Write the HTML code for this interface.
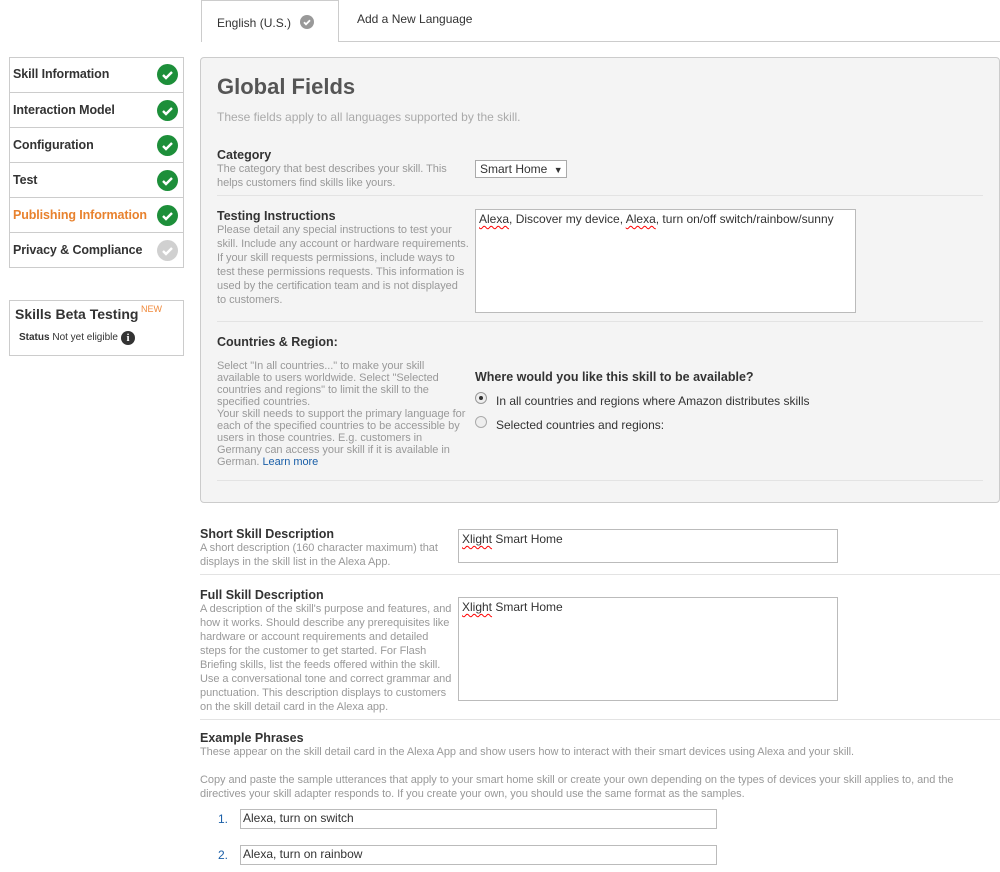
<!DOCTYPE html>
<html><head><meta charset="utf-8"><style>
*{margin:0;padding:0;box-sizing:border-box}
body{width:1000px;height:872px;position:relative;background:#fff;font-family:"Liberation Sans",Arial,sans-serif;color:#333;overflow:hidden}
.a{position:absolute;white-space:nowrap}
.lbl{font-size:12.5px;font-weight:bold;color:#333}
.d{font-size:11px;color:#999;line-height:14px;white-space:nowrap;letter-spacing:-0.05px}
.sep{position:absolute;height:1px;background:#e3e3e3}
.ta{position:absolute;border:1px solid #bbb;background:#fff;font-size:12px;padding:2px 3px;color:#333}
.sq{text-decoration:underline wavy red;text-decoration-thickness:1px;text-underline-offset:2px}
.row{position:absolute;left:10px;width:173px;height:35px;border-top:1px solid #ccc;font-size:12.5px;font-weight:bold;padding:10px 0 0 3px;letter-spacing:-0.1px}
.ck{position:absolute;right:5px;top:7px;width:21px;height:21px;border-radius:50%;background:#1d8f3a}
.ck svg{position:absolute;left:0;top:0}
</style></head><body>
<div class="a" style="left:201px;top:0;width:138px;height:42px;border:1px solid #ccc;border-bottom:none;background:#fff;font-size:12px;padding:14px 0 0 15px">English (U.S.)
<span style="display:inline-block;width:14px;height:14px;border-radius:50%;background:#999;vertical-align:-2px;margin-left:6px;position:relative"><svg width="14" height="14" style="position:absolute;left:0;top:0"><path d="M4 7.3l2 2 4-4" stroke="#fff" stroke-width="1.8" fill="none"/></svg></span></div>
<div class="a" style="left:338px;top:41px;width:662px;height:1px;background:#ccc"></div>
<div class="a" style="left:357px;top:12px;font-size:12px">Add a New Language</div>
<div class="a" style="left:9px;top:57px;width:175px;height:211px;border:1px solid #ccc"></div>
<div class="row" style="top:57px;border-top:none">Skill Information<div class="ck"><svg width="21" height="21"><path d="M6 11l3 3 6-6" stroke="#fff" stroke-width="2.4" fill="none"/></svg></div></div>
<div class="row" style="top:92px">Interaction Model<div class="ck"><svg width="21" height="21"><path d="M6 11l3 3 6-6" stroke="#fff" stroke-width="2.4" fill="none"/></svg></div></div>
<div class="row" style="top:127px">Configuration<div class="ck"><svg width="21" height="21"><path d="M6 11l3 3 6-6" stroke="#fff" stroke-width="2.4" fill="none"/></svg></div></div>
<div class="row" style="top:162px">Test<div class="ck"><svg width="21" height="21"><path d="M6 11l3 3 6-6" stroke="#fff" stroke-width="2.4" fill="none"/></svg></div></div>
<div class="row" style="top:197px;color:#e8822e">Publishing Information<div class="ck"><svg width="21" height="21"><path d="M6 11l3 3 6-6" stroke="#fff" stroke-width="2.4" fill="none"/></svg></div></div>
<div class="row" style="top:232px">Privacy &amp; Compliance<div class="ck" style="background:#d0d0d0"><svg width="21" height="21"><path d="M6 11l3 3 6-6" stroke="#fff" stroke-width="2.4" fill="none"/></svg></div></div>
<div class="a" style="left:9px;top:300px;width:175px;height:56px;border:1px solid #ccc"></div>
<div class="a" style="left:15px;top:306px;font-size:14px;font-weight:bold">Skills Beta Testing</div>
<div class="a" style="left:141px;top:304px;font-size:9px;color:#f08a3c">NEW</div>
<div class="a" style="left:19px;top:332px;font-size:10px"><b>Status</b> Not yet eligible</div>
<div class="a" style="left:121px;top:331px;width:14px;height:14px;border-radius:50%;background:#333;color:#fff;font-size:11px;font-weight:bold;text-align:center;line-height:14px;font-family:'Liberation Serif',serif">i</div>
<div class="a" style="left:200px;top:57px;width:800px;height:446px;background:#f4f4f4;border:1px solid #ccc;border-radius:4px"></div>
<div class="a" style="left:217px;top:74px;font-size:22px;font-weight:bold;color:#555">Global Fields</div>
<div class="a" style="left:217px;top:110px;font-size:12px;color:#aaa">These fields apply to all languages supported by the skill.</div>
<div class="a lbl" style="left:217px;top:148px">Category</div>
<div class="a d" style="left:217px;top:162px">The category that best describes your skill. This<br>helps customers find skills like yours.</div>
<div class="a" style="left:475px;top:160px;width:92px;height:18px;border:1px solid #aaa;background:#fff;font-size:12px;padding:1px 4px">Smart Home <span style="font-size:9px;margin-left:3px">▼</span></div>
<div class="sep" style="left:217px;top:195px;width:766px"></div>
<div class="a lbl" style="left:217px;top:209px">Testing Instructions</div>
<div class="a d" style="left:217px;top:223px">Please detail any special instructions to test your<br>skill. Include any account or hardware requirements.<br>If your skill requests permissions, include ways to<br>test these permissions requests. This information is<br>used by the certification team and is not displayed<br>to customers.</div>
<div class="ta" style="left:475px;top:209px;width:381px;height:104px"><span class="sq">Alexa</span>, Discover my device, <span class="sq">Alexa</span>, turn on/off switch/rainbow/sunny</div>
<div class="sep" style="left:217px;top:321px;width:766px"></div>
<div class="a lbl" style="left:217px;top:335px">Countries &amp; Region:</div>
<div class="a d" style="left:217px;top:360px;line-height:12px">Select "In all countries..." to make your skill<br>available to users worldwide. Select "Selected<br>countries and regions" to limit the skill to the<br>specified countries.<br>Your skill needs to support the primary language for<br>each of the specified countries to be accessible by<br>users in those countries. E.g. customers in<br>Germany can access your skill if it is available in<br>German. <span style="color:#1a5fa8">Learn more</span></div>
<div class="a lbl" style="left:475px;top:370px">Where would you like this skill to be available?</div>
<div class="a" style="left:475px;top:392px;width:12px;height:12px;border-radius:50%;border:1px solid #999;background:#eee"><div style="position:absolute;left:3px;top:3px;width:4px;height:4px;border-radius:50%;background:#333"></div></div>
<div class="a" style="left:496px;top:394px;font-size:12px">In all countries and regions where Amazon distributes skills</div>
<div class="a" style="left:475px;top:416px;width:12px;height:12px;border-radius:50%;border:1px solid #aaa;background:#eee"></div>
<div class="a" style="left:496px;top:418px;font-size:12px">Selected countries and regions:</div>
<div class="sep" style="left:217px;top:480px;width:766px"></div>
<div class="a lbl" style="left:200px;top:527px">Short Skill Description</div>
<div class="a d" style="left:200px;top:541px">A short description (160 character maximum) that<br>displays in the skill list in the Alexa App.</div>
<div class="ta" style="left:458px;top:529px;width:380px;height:34px"><span class="sq">Xlight</span> Smart Home</div>
<div class="sep" style="left:200px;top:574px;width:800px"></div>
<div class="a lbl" style="left:200px;top:588px">Full Skill Description</div>
<div class="a d" style="left:200px;top:602px">A description of the skill's purpose and features, and<br>how it works. Should describe any prerequisites like<br>hardware or account requirements and detailed<br>steps for the customer to get started. For Flash<br>Briefing skills, list the feeds offered within the skill.<br>Use a conversational tone and correct grammar and<br>punctuation. This description displays to customers<br>on the skill detail card in the Alexa app.</div>
<div class="ta" style="left:458px;top:597px;width:380px;height:104px"><span class="sq">Xlight</span> Smart Home</div>
<div class="sep" style="left:200px;top:719px;width:800px"></div>
<div class="a lbl" style="left:200px;top:731px">Example Phrases</div>
<div class="a d" style="left:200px;top:745px">These appear on the skill detail card in the Alexa App and show users how to interact with their smart devices using Alexa and your skill.</div>
<div class="a d" style="left:200px;top:773px">Copy and paste the sample utterances that apply to your smart home skill or create your own depending on the types of devices your skill applies to, and the<br>directives your skill adapter responds to. If you create your own, you should use the same format as the samples.</div>
<div class="a" style="left:218px;top:812px;font-size:12px;color:#1a5fa8">1.</div>
<div class="ta" style="left:240px;top:809px;width:477px;height:20px;padding:1px 2px">Alexa, turn on switch</div>
<div class="a" style="left:218px;top:848px;font-size:12px;color:#1a5fa8">2.</div>
<div class="ta" style="left:240px;top:845px;width:477px;height:20px;padding:1px 2px">Alexa, turn on rainbow</div>
</body></html>
